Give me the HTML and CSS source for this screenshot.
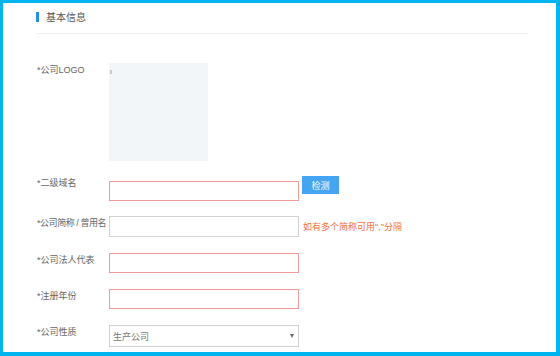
FILE: index.html
```html
<!DOCTYPE html>
<html lang="zh">
<head>
  <meta charset="UTF-8">
  <title>基本信息</title>
  <link rel="stylesheet" href="styles.css">
</head>
<body>
  <div class="frame">
    <div class="head"><span class="head-bar"></span>基本信息</div>
    <div class="form">
      <div class="row row-logo">
        <div class="label">*公司LOGO</div>
        <div class="logo-box"><span class="logo-mark"></span></div>
      </div>
      <div class="row row-domain">
        <div class="label">*二级域名</div>
        <input class="field field-err field-low" type="text">
        <button class="btn">检测</button>
      </div>
      <div class="row">
        <div class="label label-tight">*公司简称 / 曾用名</div>
        <div class="field-wrap">
          <input class="field field-tall" type="text">
          <span class="hint">如有多个简称可用","分隔</span>
        </div>
      </div>
      <div class="row">
        <div class="label">*公司法人代表</div>
        <input class="field field-err" type="text">
      </div>
      <div class="row">
        <div class="label">*注册年份</div>
        <input class="field field-err" type="text">
      </div>
      <div class="row">
        <div class="label">*公司性质</div>
        <div class="select" role="listbox">生产公司<span class="caret"></span></div>
      </div>
    </div>
  </div>
</body>
</html>
```

FILE: styles.css
```css
*, *::before, *::after { box-sizing:border-box; margin:0; padding:0; }
html, body { width:100%; height:100%; overflow:hidden; background:#fff; }
body { font-family:"Liberation Sans","Noto Sans CJK SC",sans-serif; color:#666; }

.frame {
  height:356px;
  border:3px solid #00b4f0; border-right-width:4px; border-bottom-width:4px;
  padding:0 28px 0 33px;
  overflow:hidden;
}

.head {
  display:flex; align-items:center;
  height:31px; padding-bottom:3px;
  border-bottom:1px solid #f0f0f0;
  font-size:10px; color:#555;
}
.head-bar { width:3px; height:10px; background:#2a8ee0; margin-right:7px; }

.form { padding-top:29px; }
.row { display:flex; align-items:flex-start; margin-bottom:16px; }
.row-logo { margin-bottom:15px; }
.row-domain { margin-bottom:15px; }
.label { width:73px; padding-left:1px; font-size:9px; line-height:14px; color:#666; white-space:nowrap; }
.label-tight { letter-spacing:-0.45px; }

.logo-box { position:relative; width:99px; height:98px; background:#f3f6f9; }
.logo-mark { position:absolute; left:1px; top:7px; width:2px; height:4px; background:#c8c8c8; }

.field {
  width:190px; height:20px;
  border:1px solid #d2d2d2; background:#fff;
  font:inherit; font-size:9px; outline:none;
}
.field-err { border-color:#f29a9a; }
.field-low { margin-top:5px; }
.field-tall { height:21px; }

.btn {
  width:37px; height:18px; margin-left:3px;
  border:0; background:#45a5f2; color:#fff;
  font:inherit; font-size:9px;
}

.field-wrap { display:flex; align-items:center; }
.hint { margin-left:4px; font-size:9px; color:#f5703f; white-space:nowrap; }

.select {
  display:flex; align-items:center; justify-content:space-between;
  width:190px; height:22px; padding:0 3px 0 3px;
  border:1px solid #d2d2d2;
  font-size:9px; color:#777;
}
.caret {
  width:0; height:0; margin-right:1px;
  border-left:2.5px solid transparent; border-right:2.5px solid transparent;
  border-top:4px solid #666;
}
```
